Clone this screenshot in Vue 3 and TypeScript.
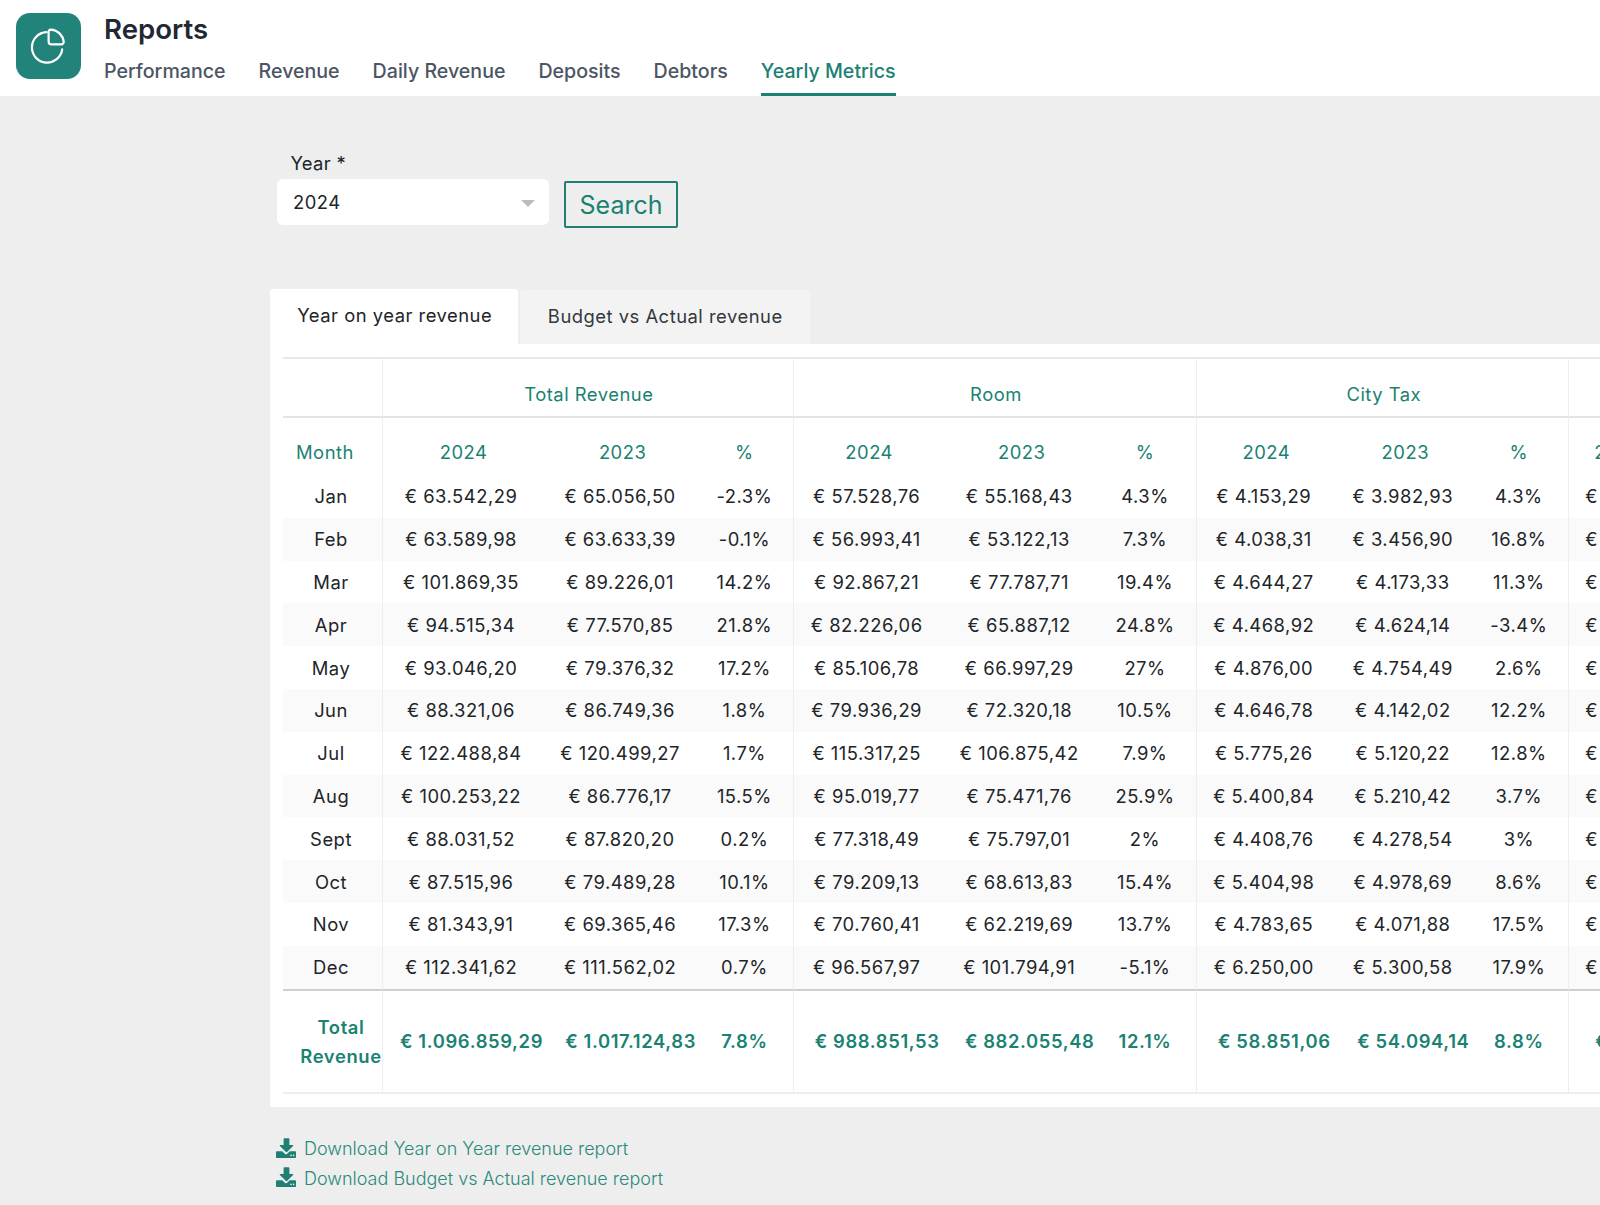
<script setup lang="ts">
interface Row { m: string; v: string[] }
const nav: string[] = ['Performance', 'Revenue', 'Daily Revenue', 'Deposits', 'Debtors', 'Yearly Metrics']
const widths: number[] = [100, 161, 157, 92.5, 151, 154, 98.5, 138, 140, 94, 200]
const rows: Row[] = [
  { m: 'Jan', v: ['€ 63.542,29', '€ 65.056,50', '-2.3%', '€ 57.528,76', '€ 55.168,43', '4.3%', '€ 4.153,29', '€ 3.982,93', '4.3%'] },
  { m: 'Feb', v: ['€ 63.589,98', '€ 63.633,39', '-0.1%', '€ 56.993,41', '€ 53.122,13', '7.3%', '€ 4.038,31', '€ 3.456,90', '16.8%'] },
  { m: 'Mar', v: ['€ 101.869,35', '€ 89.226,01', '14.2%', '€ 92.867,21', '€ 77.787,71', '19.4%', '€ 4.644,27', '€ 4.173,33', '11.3%'] },
  { m: 'Apr', v: ['€ 94.515,34', '€ 77.570,85', '21.8%', '€ 82.226,06', '€ 65.887,12', '24.8%', '€ 4.468,92', '€ 4.624,14', '-3.4%'] },
  { m: 'May', v: ['€ 93.046,20', '€ 79.376,32', '17.2%', '€ 85.106,78', '€ 66.997,29', '27%', '€ 4.876,00', '€ 4.754,49', '2.6%'] },
  { m: 'Jun', v: ['€ 88.321,06', '€ 86.749,36', '1.8%', '€ 79.936,29', '€ 72.320,18', '10.5%', '€ 4.646,78', '€ 4.142,02', '12.2%'] },
  { m: 'Jul', v: ['€ 122.488,84', '€ 120.499,27', '1.7%', '€ 115.317,25', '€ 106.875,42', '7.9%', '€ 5.775,26', '€ 5.120,22', '12.8%'] },
  { m: 'Aug', v: ['€ 100.253,22', '€ 86.776,17', '15.5%', '€ 95.019,77', '€ 75.471,76', '25.9%', '€ 5.400,84', '€ 5.210,42', '3.7%'] },
  { m: 'Sept', v: ['€ 88.031,52', '€ 87.820,20', '0.2%', '€ 77.318,49', '€ 75.797,01', '2%', '€ 4.408,76', '€ 4.278,54', '3%'] },
  { m: 'Oct', v: ['€ 87.515,96', '€ 79.489,28', '10.1%', '€ 79.209,13', '€ 68.613,83', '15.4%', '€ 5.404,98', '€ 4.978,69', '8.6%'] },
  { m: 'Nov', v: ['€ 81.343,91', '€ 69.365,46', '17.3%', '€ 70.760,41', '€ 62.219,69', '13.7%', '€ 4.783,65', '€ 4.071,88', '17.5%'] },
  { m: 'Dec', v: ['€ 112.341,62', '€ 111.562,02', '0.7%', '€ 96.567,97', '€ 101.794,91', '-5.1%', '€ 6.250,00', '€ 5.300,58', '17.9%'] }
]
const totals: string[] = ['€ 1.096.859,29', '€ 1.017.124,83', '7.8%', '€ 988.851,53', '€ 882.055,48', '12.1%', '€ 58.851,06', '€ 54.094,14', '8.8%']
const subheads: string[] = ['2024', '2023', '%', '2024', '2023', '%', '2024', '2023', '%']
const links: string[] = ['Download Year on Year revenue report', 'Download Budget vs Actual revenue report']

function cellClass(i: number): string[] {
  const pct = i % 3 === 2
  return [pct ? `pct pct${(i - 2) / 3}` : 'amount', i % 3 === 2 ? 'group-end' : '']
}
</script>

<template>
  <div class="page">
    <header class="topbar">
      <div class="logo">
        <svg viewBox="0 0 66 66" width="66" height="66" fill="none" stroke="#fff" stroke-width="2.2" stroke-linecap="round" stroke-linejoin="round">
          <path d="M30.5 19.2a15.2 15.2 0 1 0 15.7 17.2" />
          <path d="M35 16.6c-1.4 0-2.4 1-2.4 2.4v9.4c0 1.9 1.1 3 3 3h9.6c1.6 0 2.7-1.2 2.5-2.8-.9-6.4-6.1-11.6-12.7-12z" />
        </svg>
      </div>
      <div class="heading">
        <h1 class="title">Reports</h1>
        <nav class="nav">
          <a v-for="(item, i) in nav" :key="item" class="nav-item" :class="{ active: i === nav.length - 1 }">{{ item }}</a>
        </nav>
      </div>
    </header>

    <main class="content">
      <form class="filters" @submit.prevent>
        <div class="field">
          <label class="field-label">Year *</label>
          <div class="select">
            <span>2024</span>
            <i class="caret"></i>
          </div>
        </div>
        <button class="search" type="submit">Search</button>
      </form>

      <div class="tabs">
        <div class="tab current">Year on year revenue</div>
        <div class="tab">Budget vs Actual revenue</div>
      </div>

      <section class="card">
        <table class="report">
          <colgroup>
            <col v-for="(w, i) in widths" :key="i" :style="{ width: w + 'px' }" />
          </colgroup>
          <thead>
            <tr class="group-row">
              <th class="group-end"></th>
              <th colspan="3" class="group-end">Total Revenue</th>
              <th colspan="3" class="group-end">Room</th>
              <th colspan="3" class="group-end">City Tax</th>
              <th></th>
            </tr>
            <tr class="sub-row">
              <th class="month-head group-end">Month</th>
              <th v-for="(s, i) in subheads" :key="i" :class="cellClass(i)">{{ s }}</th>
              <th class="extra extra-head">2024</th>
            </tr>
          </thead>
          <tbody>
            <tr v-for="r in rows" :key="r.m" class="data-row">
              <td class="month group-end">{{ r.m }}</td>
              <td v-for="(c, i) in r.v" :key="i" :class="cellClass(i)">{{ c }}</td>
              <td class="extra">€</td>
            </tr>
          </tbody>
          <tfoot>
            <tr class="total-row">
              <td class="total-label group-end">Total Revenue</td>
              <td v-for="(c, i) in totals" :key="i" :class="cellClass(i)">{{ c }}</td>
              <td class="extra extra-total">€</td>
            </tr>
          </tfoot>
        </table>
      </section>

      <div class="downloads">
        <a v-for="l in links" :key="l" class="download">
          <svg viewBox="0 0 20 20" width="20" height="20">
            <path fill="#1f7f72" d="M7.3 0.2h5.4c.4 0 .7.3.7.7v6h3.2c.6 0 .9.7.5 1.1l-6.1 6a.7.7 0 0 1-1 0l-6.1-6c-.4-.4-.1-1.1.5-1.1h3.2v-6c0-.4.3-.7.7-.7z" />
            <path fill="#1f7f72" d="M0.8 13.2h5.4l2.6 2.6c.7.7 1.7.7 2.4 0l2.6-2.6h5.4c.4 0 .8.4.8.8v5.2c0 .4-.4.8-.8.8H.8c-.4 0-.8-.4-.8-.8V14c0-.4.4-.8.8-.8z" />
            <circle cx="15" cy="17.4" r=".8" fill="#eee" />
            <circle cx="17.6" cy="17.4" r=".8" fill="#eee" />
          </svg>
          <span>{{ l }}</span>
        </a>
      </div>
    </main>
  </div>
</template>

<style>
html, body {
  margin: 0;
  height: 1205px;
  overflow: hidden;
  background: #eeeeee;
}
</style>

<style scoped>
.page {
  width: 1600px;
  height: 1205px;
  overflow: hidden;
  font-family: Inter, "Liberation Sans", sans-serif;
  color: #212529;
}
.topbar {
  display: flex;
  height: 96px;
  padding-left: 15.7px;
  background: #fff;
  box-sizing: border-box;
}
.logo {
  width: 65.5px;
  height: 66px;
  margin-top: 13px;
  border-radius: 14px;
  background: #21837a;
}
.logo svg { display: block; }
.heading { margin-left: 22.8px; }
.title {
  margin: 12px 0 0;
  font-size: 27.6px;
  line-height: 34px;
  font-weight: 600;
  color: #1f2933;
}
.nav {
  display: flex;
  gap: 33px;
  margin-top: 9px;
}
.nav-item {
  height: 41px;
  box-sizing: border-box;
  line-height: 33px;
  font-size: 19.6px;
  font-weight: 500;
  color: #4b5563;
}
.nav-item.active {
  color: #1a8272;
  border-bottom: 3px solid #1a8272;
}
.content { padding-left: 269.5px; }
.filters {
  display: flex;
  align-items: flex-start;
  padding: 53px 0 0 7.5px;
  height: 193px;
  box-sizing: border-box;
}
.field-label {
  display: block;
  margin: 0 0 2px 13.5px;
  font-size: 18.4px;
  line-height: 28px;
  letter-spacing: .3px;
}
.select {
  display: flex;
  align-items: center;
  justify-content: space-between;
  width: 272px;
  height: 46px;
  padding: 0 14px 0 16px;
  box-sizing: border-box;
  border-radius: 6px;
  background: #fff;
  font-size: 18.4px;
  letter-spacing: .5px;
}
.caret {
  width: 0;
  height: 0;
  margin-top: 3px;
  border-left: 7px solid transparent;
  border-right: 7px solid transparent;
  border-top: 7px solid #bdbdbd;
}
.search {
  width: 114px;
  height: 47px;
  margin: 32px 0 0 15px;
  padding: 0;
  border: 2px solid #1f7f72;
  border-radius: 2px;
  background: transparent;
  color: #1a8272;
  font-family: inherit;
  font-size: 25px;
}
.tabs {
  display: flex;
  align-items: flex-end;
  gap: 1.5px;
  height: 55px;
}
.tab {
  display: flex;
  align-items: center;
  justify-content: center;
  width: 290.5px;
  height: 54px;
  padding: 0 0 2px 1px;
  box-sizing: border-box;
  border-radius: 3px 3px 0 0;
  background: #f3f3f3;
  font-size: 18.4px;
  letter-spacing: .5px;
  color: #33383d;
}
.tab.current {
  width: 248.5px;
  height: 55px;
  padding: 0 0 3px 2px;
  background: #fff;
  color: #212529;
}
.card {
  width: 1400px;
  padding: 13px 0 13px 13.5px;
  box-sizing: border-box;
  background: #fff;
}
.report {
  table-layout: fixed;
  width: 1486.5px;
  border-collapse: separate;
  border-spacing: 0;
  font-size: 18.4px;
  letter-spacing: .5px;
  text-align: center;
}
.report th {
  font-weight: 400;
  color: #1a8272;
}
.report th, .report td { padding: 0; white-space: nowrap; }
.group-end { border-right: 1px solid #eeeeee; }
.group-row th {
  border-top: 2px solid #e8e8e8;
  border-bottom: 2px solid #e4e4e4;
  box-sizing: border-box;
  height: 61px;
  padding: 12px 0 0 2px;
}
.sub-row th {
  height: 57px;
  padding-top: 10px;
  box-sizing: border-box;
}
.report th.month-head {
  text-align: left;
  padding-left: 13px;
}
.data-row td { height: 42.8px; box-sizing: border-box; }
.data-row:nth-child(even) td { background: #fafafa; }
.month { padding-right: 3px !important; box-sizing: border-box; }
.amount { box-sizing: border-box; }
.data-row .amount { padding-right: 5px; }
.pct0 { padding-right: 5px !important; }
.pct1 { padding-right: 5px !important; }
.pct2 { padding-right: 6px !important; }
.extra {
  text-align: left;
  padding-left: 16px !important;
}
.report th.extra-head { padding-left: 25px !important; }
.total-row td {
  height: 105px;
  box-sizing: border-box;
  border-top: 2px solid #cfcfcf;
  border-bottom: 2px solid #eeeeee;
  color: #1a8272;
  font-weight: 600;
  letter-spacing: .62px;
}
.total-row .amount { padding-left: 16px; }
.total-row td.extra-total { padding-left: 26px !important; }
.total-row .total-label {
  padding: 1px 0 0 17px;
  white-space: normal;
  line-height: 29px;
}
.downloads {
  display: flex;
  flex-direction: column;
  padding: 27.5px 0 0 6.5px;
}
.download {
  display: flex;
  align-items: center;
  gap: 8px;
  height: 29.5px;
  font-size: 18px;
  font-weight: 300;
  color: #2a8a7c;
}
.download svg { margin-bottom: 2px; }
</style>
